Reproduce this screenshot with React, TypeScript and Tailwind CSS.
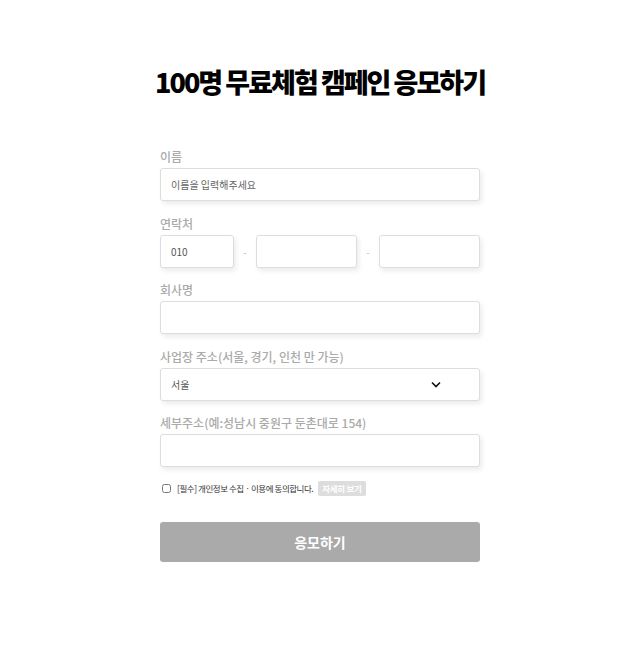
import React from 'react'

const font = { fontFamily: '"Noto Sans CJK KR", "Noto Sans", sans-serif' }

const Label = ({ children }: { children: React.ReactNode }) => (
  <label className="block text-[12px] font-medium text-[#aaaaaa] leading-[16px] mb-[3px]">{children}</label>
)

const boxClass =
  'h-[33px] rounded-[3px] border border-[#dddddd] bg-white shadow-[2px_3px_5px_rgba(0,0,0,0.08)] px-[10px] text-[10px] text-[#555] outline-none'

export default function App() {
  return (
    <div className="min-h-[659px] bg-white flex flex-col items-center pl-[22px]" style={font}>
      <h1 className="mt-[62px] text-[27px] font-black tracking-[-2px] text-black leading-[40px]">
        100명 무료체험 캠페인 응모하기
      </h1>

      <form className="w-[320px] mt-[47px] flex flex-col">
        <div className="mb-[14.5px]">
          <Label>이름</Label>
          <input className={`${boxClass} w-full placeholder:text-[#666]`} placeholder="이름을 입력해주세요" />
        </div>

        <div className="mb-[14.5px]">
          <Label>연락처</Label>
          <div className="flex items-center">
            <input className={`${boxClass} w-[74px]`} defaultValue="010" />
            <span className="w-[22px] text-center text-[10px] text-[#bbb]">-</span>
            <input className={`${boxClass} w-[101px]`} />
            <span className="w-[22px] text-center text-[10px] text-[#bbb]">-</span>
            <input className={`${boxClass} w-[101px]`} />
          </div>
        </div>

        <div className="mb-[14.5px]">
          <Label>회사명</Label>
          <input className={`${boxClass} w-full`} />
        </div>

        <div className="mb-[14.5px]">
          <Label>사업장 주소(서울, 경기, 인천 만 가능)</Label>
          <div className={`${boxClass} w-full flex items-center justify-between pr-[38px]`}>
            <span>서울</span>
            <svg width="10" height="7" viewBox="0 0 10 7" fill="none" stroke="#111" strokeWidth="1.6">
              <path d="M1 1.5l4 4 4-4" />
            </svg>
          </div>
        </div>

        <div className="mb-[14px]">
          <Label>세부주소(예:성남시 중원구 둔촌대로 154)</Label>
          <input className={`${boxClass} w-full`} />
        </div>

        <div className="flex items-center pl-[2px] h-[15px]">
          <input type="checkbox" className="w-[9px] h-[9px] m-0 mr-[6px]" />
          <span className="text-[8.5px] text-[#333] tracking-[-0.45px]">[필수] 개인정보 수집 · 이용에 동의합니다.</span>
          <button type="button" className="ml-[5px] h-[15px] px-[4px] bg-[#dddddd] rounded-[2px] text-[8.5px] font-bold text-white tracking-[-0.3px]">
            자세히 보기
          </button>
        </div>

        <button type="button" className="mt-[26px] h-[40px] w-full rounded-[3px] bg-[#aaaaaa] text-white text-[14px] font-bold">
          응모하기
        </button>
      </form>
    </div>
  )
}
